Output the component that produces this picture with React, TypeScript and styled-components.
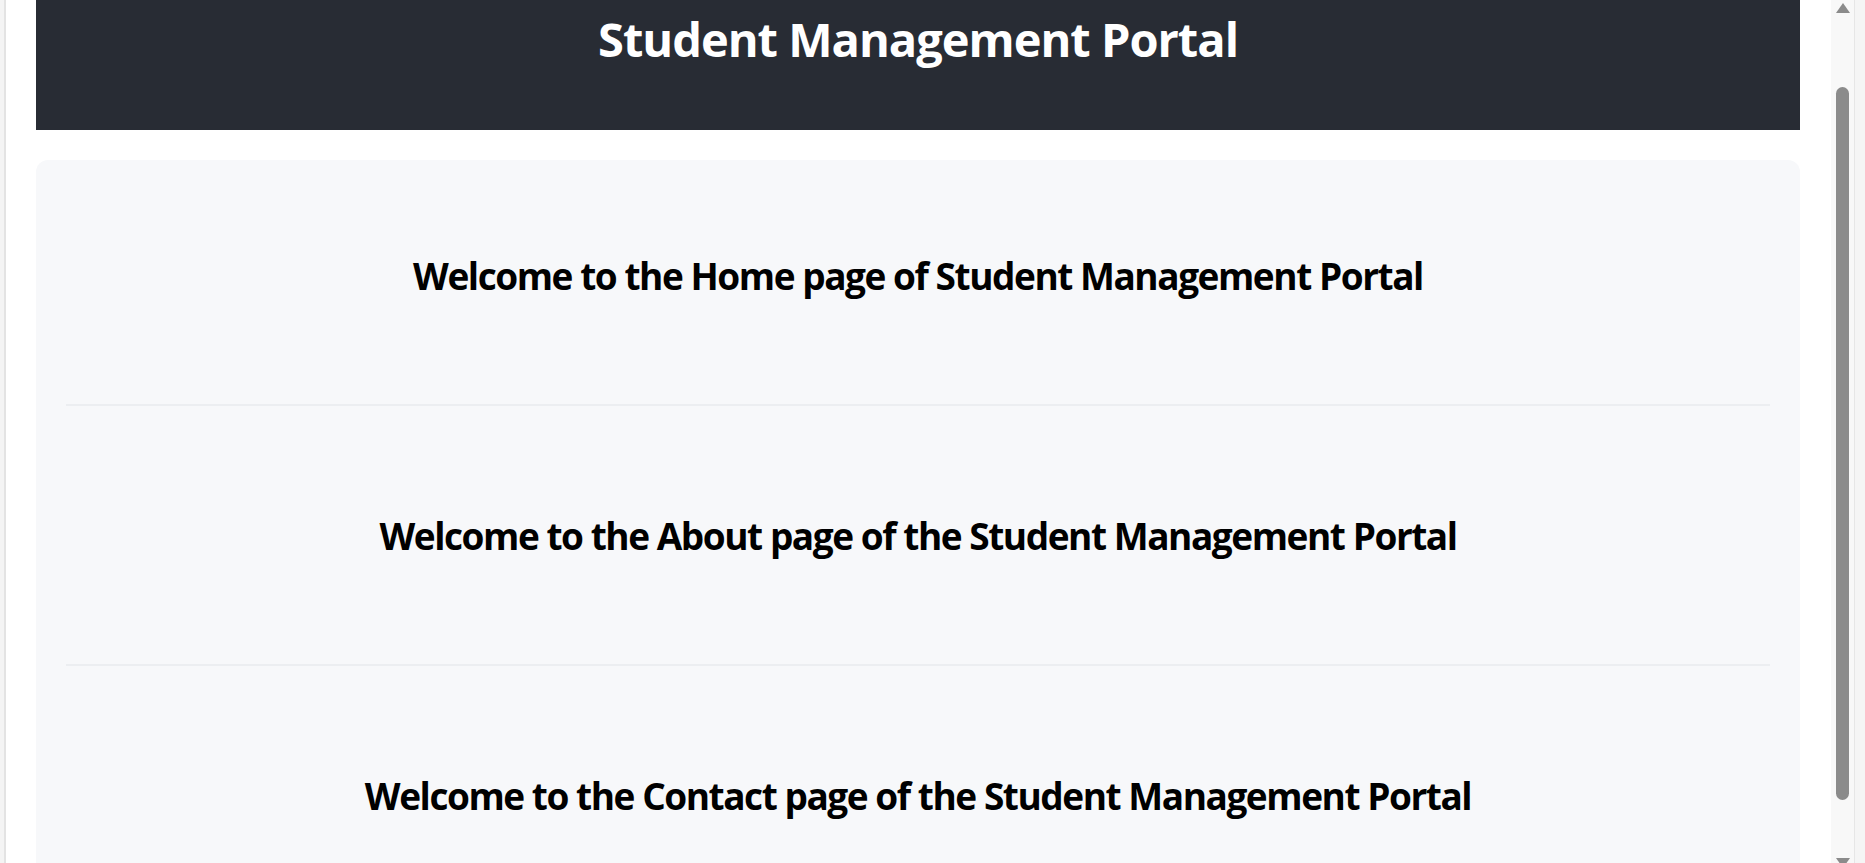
import React from 'react';
import styled, { createGlobalStyle } from 'styled-components';

const GlobalStyle = createGlobalStyle`
  html, body {
    margin: 0;
    padding: 0;
    height: 100%;
    overflow: hidden;
  }
  body {
    font-family: "Open Sans", "Liberation Sans", sans-serif;
    background: #ffffff;
  }
`;

const Frame = styled.div`
  display: flex;
  width: 100vw;
  height: 100vh;
`;

const LeftEdge = styled.div`
  flex-shrink: 0;
  width: 4px;
  background: #f4f4f4;
  border-right: 2px solid #e3e3e3;
`;

const Viewport = styled.main`
  flex: 1;
  min-width: 0;
  overflow: hidden;
  padding: 0 31px 0 30px;
  background: #ffffff;
`;

const Header = styled.header`
  box-sizing: border-box;
  height: 130px;
  padding-top: 16px;
  background: #282c34;
  text-align: center;
`;

const Title = styled.h1`
  margin: 0;
  color: #ffffff;
  font-size: 47px;
  font-weight: 700;
  line-height: 1;
  letter-spacing: -1px;
`;

const Panel = styled.section`
  margin-top: 30px;
  padding: 0 30px;
  background: #f7f8fa;
  border-radius: 12px 12px 0 0;
`;

const Section = styled.div<{ $first?: boolean }>`
  padding: ${p => (p.$first ? '97px' : '111px')} 0 110px;
  text-align: center;

  & + & {
    border-top: 2px solid #eceef1;
  }
`;

const Heading = styled.h2`
  margin: 0;
  color: #000000;
  font-size: 37px;
  font-weight: 700;
  line-height: 1;
  letter-spacing: -1.45px;
`;

const Track = styled.div`
  flex-shrink: 0;
  width: 23px;
  display: flex;
  flex-direction: column;
  align-items: center;
  background: #f8f8f8;
  border-right: 1px solid #e6e6e6;
  overflow: hidden;
`;

const Arrow = styled.div<{ $down?: boolean }>`
  flex-shrink: 0;
  width: 0;
  height: 0;
  border-left: 7.5px solid transparent;
  border-right: 7.5px solid transparent;
  ${p =>
    p.$down
      ? 'border-top: 10px solid #8b8b8b; margin-top: 58px;'
      : 'border-bottom: 10px solid #8b8b8b; margin-top: 3px;'}
`;

const Thumb = styled.div`
  flex-shrink: 0;
  width: 13px;
  height: 713px;
  margin-top: 74px;
  border-radius: 7px;
  background: #8b8b8b;
`;

const RightEdge = styled.div`
  flex-shrink: 0;
  width: 10px;
  background: #f5f5f5;
`;

const pages = [
  'Home page of Student Management Portal',
  'About page of the Student Management Portal',
  'Contact page of the Student Management Portal',
];

const App = () => {
  return (
    <>
      <GlobalStyle />
      <Frame>
        <LeftEdge />
        <Viewport>
          <Header>
            <Title>Student Management Portal</Title>
          </Header>
          <Panel>
            {pages.map((page, i) => (
              <Section key={page} $first={i === 0}>
                <Heading>Welcome to the {page}</Heading>
              </Section>
            ))}
          </Panel>
        </Viewport>
        <Track>
          <Arrow />
          <Thumb />
          <Arrow $down />
        </Track>
        <RightEdge />
      </Frame>
    </>
  );
};

export default App;
